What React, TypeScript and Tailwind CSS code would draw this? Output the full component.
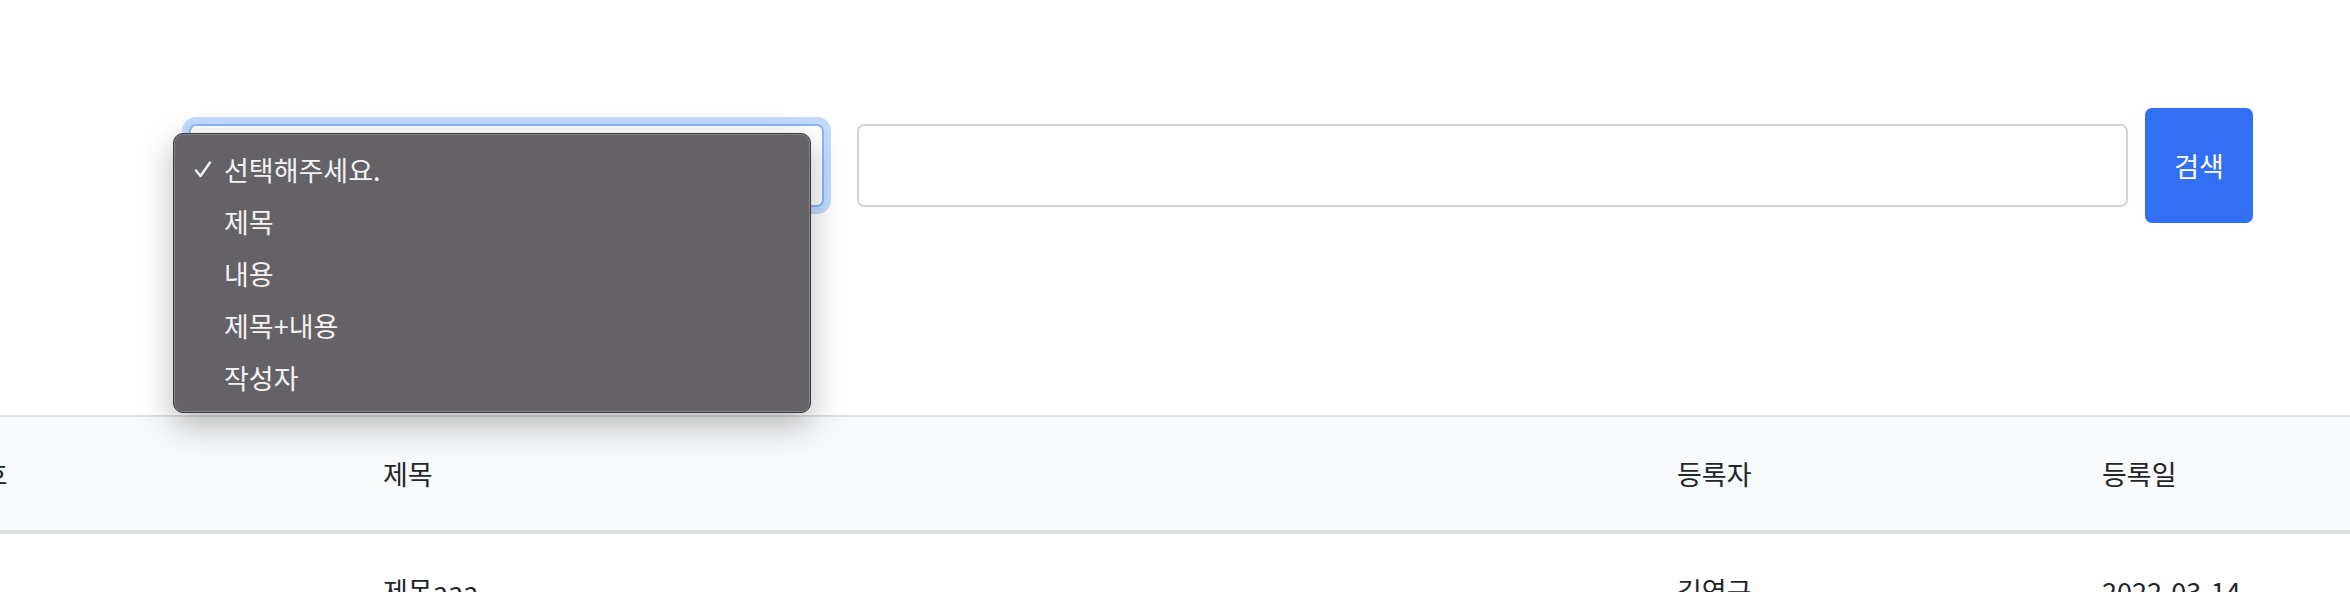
import React from 'react';

const options = ['선택해주세요.', '제목', '내용', '제목+내용', '작성자'];

const CheckMark = () => (
  <svg width="18" height="17" viewBox="0 0 18 17" fill="none" className="shrink-0">
    <path d="M2 9.5 L6.5 15 L16 1.5" stroke="#f2f2f2" strokeWidth="2.4" strokeLinecap="round" strokeLinejoin="round" />
  </svg>
);

const SelectMenu: React.FC = () => (
  <div className="absolute left-[-16px] top-[9px] w-[638px] h-[280px] rounded-[10px] border border-[#3a393c] bg-[#646267] shadow-[inset_0_0_0_1px_rgba(255,255,255,0.22),0_12px_34px_rgba(0,0,0,0.28)] py-[9px] z-10">
    {options.map((opt, i) => (
      <div key={opt} className="flex items-center h-[52px] pl-[20px] text-[27px] text-[#f3f3f3] leading-none">
        <span className="w-[30px] flex items-center">{i === 0 ? <CheckMark /> : null}</span>
        <span>{opt}</span>
      </div>
    ))}
  </div>
);

const SearchBar: React.FC = () => (
  <div className="flex items-center pl-[189px] pt-[108px]">
    <div className="relative">
      <div className="w-[635px] h-[83px] rounded-[7px] border-2 border-[#86b7fe] bg-white shadow-[0_0_0_7px_rgba(13,110,253,0.25)]" />
      <SelectMenu />
    </div>
    <div className="ml-[33px] w-[1271px] h-[83px] rounded-[7px] border-2 border-[#ced4da] bg-white" />
    <button className="ml-[17px] w-[108px] h-[115px] rounded-[7px] bg-[#316ff5] text-white text-[27px] leading-none">
      검색
    </button>
  </div>
);

const Row: React.FC<{ cells: string[]; header?: boolean }> = ({ cells, header }) => (
  <div className={`flex items-center h-[113px] text-[27px] text-[#212529] leading-none ${header ? 'bg-[#f8f9fa]' : 'bg-white'}`}>
    <div className="w-[425px] -ml-[42px] shrink-0">{cells[0]}</div>
    <div className="w-[1294px] shrink-0">{cells[1]}</div>
    <div className="w-[425px] shrink-0">{cells[2]}</div>
    <div className="flex-1">{cells[3]}</div>
  </div>
);

export default function App() {
  return (
    <div className="w-[2350px] h-[592px] overflow-hidden bg-white" style={{ fontFamily: '"Noto Sans CJK KR", "Noto Sans", sans-serif' }}>
      <SearchBar />
      <div className="mt-[192px] border-t-2 border-[#dee2e6]">
        <div className="border-b-4 border-[#dee2e6]">
          <Row header cells={['번호', '제목', '등록자', '등록일']} />
        </div>
        <Row cells={['1', '제목aaa', '김영구', '2022-03-14']} />
      </div>
    </div>
  );
}
